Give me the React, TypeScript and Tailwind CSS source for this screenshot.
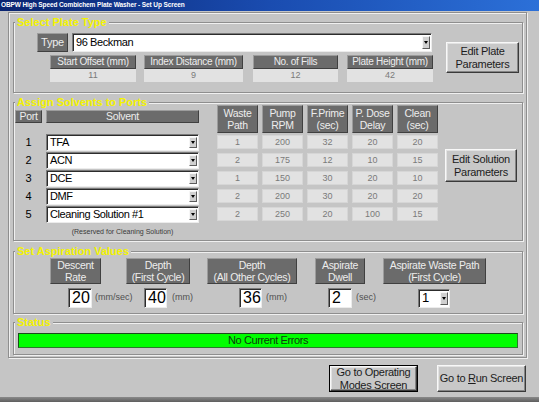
import React from "react";

const F = "font-['Liberation_Sans',Arial,sans-serif]";

function Hdr({ children, className = "" }: { children: React.ReactNode; className?: string }) {
  return (
    <div
      className={`bg-[#6b6b6b] text-[#ededed] border border-t-[#9c9c9c] border-l-[#9c9c9c] border-r-[#404040] border-b-[#404040] flex items-center justify-center text-center whitespace-nowrap ${className}`}
    >
      {children}
    </div>
  );
}

function Group({ title, className = "", children }: { title: string; className?: string; children?: React.ReactNode }) {
  return (
    <div className={`relative shrink-0 border border-[#8e8e8e] shadow-[inset_1px_1px_0_#f0f0f0,1px_1px_0_#f0f0f0] ${className}`}>
      <div className="absolute left-[1px] top-[-8px] px-[2px] bg-[#c5c5c5] text-[11px] font-bold leading-[14px] text-[#f4f400] whitespace-nowrap">
        {title}
      </div>
      {children}
    </div>
  );
}

function Arrow() {
  return (
    <svg width="4" height="3" viewBox="0 0 4 3">
      <path d="M0 0H4L2 3Z" fill="#000" />
    </svg>
  );
}

function Combo({ value, className = "", text = "text-[11px] tracking-[-0.4px]" }: { value: string; className?: string; text?: string }) {
  return (
    <div
      className={`flex bg-white border border-t-[#7a7a7a] border-l-[#7a7a7a] border-r-[#ececec] border-b-[#ececec] shadow-[inset_1px_1px_0_#2c2c2c] ${className}`}
    >
      <div className={`flex-1 flex items-center pl-[3px] text-black whitespace-nowrap overflow-hidden ${text}`}>{value}</div>
      <div className="w-[8px] my-[2px] mr-[1px] bg-[#d0d0d0] border border-t-[#f6f6f6] border-l-[#f6f6f6] border-r-[#5c5c5c] border-b-[#5c5c5c] flex items-center justify-center">
        <Arrow />
      </div>
    </div>
  );
}

function Field({ value, className = "" }: { value: string; className?: string }) {
  return (
    <div
      className={`h-[20px] bg-white border border-t-[#7a7a7a] border-l-[#7a7a7a] border-r-[#ececec] border-b-[#ececec] shadow-[inset_1px_1px_0_#2c2c2c] flex items-center pl-[3px] text-[16px] leading-none text-black ${className}`}
    >
      {value}
    </div>
  );
}

function Btn({ children, className = "" }: { children: React.ReactNode; className?: string }) {
  return (
    <div
      className={`bg-[#c8c8c8] border border-t-[#f8f8f8] border-l-[#f8f8f8] border-r-[#3a3a3a] border-b-[#3a3a3a] shadow-[inset_-1px_-1px_0_#858585,inset_1px_1px_0_#e2e2e2] flex items-center justify-center text-center text-[11px] leading-[13px] tracking-[-0.3px] text-[#1c1c1c] ${className}`}
    >
      {children}
    </div>
  );
}

function Cell({ v }: { v: number }) {
  return (
    <div className="h-[14px] self-center bg-[#e2e2e2] border border-[#d6d6d6] flex items-center justify-center text-[9px] leading-none text-[#7a7a7a]">
      {v}
    </div>
  );
}

const solvents = [
  { p: 1, s: "TFA", v: [1, 200, 32, 20, 20] },
  { p: 2, s: "ACN", v: [2, 175, 12, 10, 15] },
  { p: 3, s: "DCE", v: [1, 150, 30, 20, 10] },
  { p: 4, s: "DMF", v: [2, 200, 30, 20, 20] },
  { p: 5, s: "Cleaning Solution #1", v: [2, 250, 20, 100, 15] },
];

const plateFields = [
  { l: "Start Offset (mm)", v: "11", w: "w-[86px]", ml: "ml-0" },
  { l: "Index Distance (mm)", v: "9", w: "w-[99px]", ml: "ml-[8px]" },
  { l: "No. of Fills", v: "12", w: "w-[85px]", ml: "ml-[10px]" },
  { l: "Plate Height (mm)", v: "42", w: "w-[86px]", ml: "ml-[9px]" },
];

export default function App() {
  return (
    <div className={`w-[539px] h-[402px] bg-[#c5c5c5] flex flex-col overflow-hidden ${F}`}>
      {/* Title bar */}
      <div className="h-[11px] shrink-0 bg-gradient-to-r from-[#0a2470] via-[#1a4cb0] to-[#2c70d8] flex items-center pl-[1px]">
        <span className="text-white font-bold text-[6.5px] leading-none tracking-[-0.1px] whitespace-nowrap">
          OBPW High Speed Combichem Plate Washer - Set Up Screen
        </span>
      </div>

      {/* Outer frame */}
      <div className="ml-[8px] mt-[1px] w-[519px] h-[346px] shrink-0 border border-[#8e8e8e] shadow-[inset_1px_1px_0_#f0f0f0,1px_1px_0_#f0f0f0] pl-[4px] pt-[9px] flex flex-col">
        {/* Select Plate Type */}
        <Group title="Select Plate Type" className="w-[510px] h-[71px] pt-[10px] pl-[23px] flex">
          <div className="flex flex-col">
            <div className="flex gap-[4px]">
              <Hdr className="w-[31px] h-[19px] text-[11px] tracking-[-0.2px]">Type</Hdr>
              <Combo value="96 Beckman" className="w-[360px] h-[19px]" />
            </div>
            <div className="flex mt-[3px] ml-[13px]">
              {plateFields.map((f) => (
                <div key={f.l} className={`flex flex-col ${f.w} ${f.ml}`}>
                  <Hdr className="h-[14px] text-[10px] tracking-[-0.3px] leading-none">{f.l}</Hdr>
                  <div className="h-[13px] bg-[#e2e2e2] flex items-center justify-center text-[9px] leading-none text-[#7a7a7a]">
                    {f.v}
                  </div>
                </div>
              ))}
            </div>
          </div>
          <Btn className="ml-[13px] mt-[9px] w-[73px] h-[31px]">
            Edit Plate
            <br />
            Parameters
          </Btn>
        </Group>

        {/* Assign Solvents to Ports */}
        <Group title="Assign Solvents to Ports" className="mt-[9px] w-[510px] h-[139px] pt-[2px] pl-[1px] flex">
          <div className="grid grid-cols-[27px_153px_10px_41px_41px_41px_41px_41px] grid-rows-[28px_18px_18px_18px_18px_18px_auto] gap-x-[4px]">
            <Hdr className="self-start mt-[5px] h-[13px] text-[10.5px] tracking-[-0.3px] leading-none">Port</Hdr>
            <Hdr className="self-start mt-[5px] h-[13px] text-[10.5px] tracking-[-0.3px] leading-none">Solvent</Hdr>
            <div />
            {[
              ["Waste", "Path"],
              ["Pump", "RPM"],
              ["F.Prime", "(sec)"],
              ["P. Dose", "Delay"],
              ["Clean", "(sec)"],
            ].map(([a, b]) => (
              <Hdr key={a} className="h-[28px] text-[10.5px] tracking-[-0.3px] leading-[12px]">
                <span>
                  {a}
                  <br />
                  {b}
                </span>
              </Hdr>
            ))}
            {solvents.map((r) => (
              <React.Fragment key={r.p}>
                <div className="flex items-center justify-center text-[11px] text-black leading-none">{r.p}</div>
                <Combo value={r.s} className="h-[17px] self-end" />
                <div />
                {r.v.map((v, i) => (
                  <Cell key={i} v={v} />
                ))}
              </React.Fragment>
            ))}
            <div />
            <div className="pt-[5px] text-center text-[7px] leading-none text-[#3a3a3a] whitespace-nowrap">
              (Reserved for Cleaning Solution)
            </div>
          </div>
          <Btn className="ml-[7px] mt-[44px] w-[72px] h-[33px]">
            Edit Solution
            <br />
            Parameters
          </Btn>
        </Group>

        {/* Set Aspiration Values */}
        <Group title="Set Aspiration Values" className="mt-[10px] w-[510px] h-[63px] pt-[6px] flex flex-col">
          <div className="flex text-[10.5px] tracking-[-0.3px] leading-[12px]">
            <Hdr className="ml-[36px] w-[51px] h-[26px]">
              <span>Descent<br />Rate</span>
            </Hdr>
            <Hdr className="ml-[25px] w-[64px] h-[26px]">
              <span>Depth<br />(First Cycle)</span>
            </Hdr>
            <Hdr className="ml-[17px] w-[90px] h-[26px]">
              <span>Depth<br />(All Other Cycles)</span>
            </Hdr>
            <Hdr className="ml-[18px] w-[50px] h-[26px]">
              <span>Aspirate<br />Dwell</span>
            </Hdr>
            <Hdr className="ml-[18px] w-[103px] h-[26px]">
              <span>Aspirate Waste Path<br />(First Cycle)</span>
            </Hdr>
          </div>
          <div className="flex mt-[4px] pl-[54px] text-[9px] text-[#505050]">
            <div className="w-[76px] flex items-center">
              <Field value="20" className="w-[24px]" />
              <span className="ml-[3px]">(mm/sec)</span>
            </div>
            <div className="w-[95px] flex items-center">
              <Field value="40" className="w-[23px]" />
              <span className="ml-[5px]">(mm)</span>
            </div>
            <div className="w-[89px] flex items-center">
              <Field value="36" className="w-[23px]" />
              <span className="ml-[4px]">(mm)</span>
            </div>
            <div className="w-[90px] flex items-center">
              <Field value="2" className="w-[24px]" />
              <span className="ml-[4px]">(sec)</span>
            </div>
            <Combo value="1" className="w-[32px] h-[19px] self-center" text="text-[13px]" />
          </div>
        </Group>

        {/* Status */}
        <Group title="Status" className="mt-[8px] w-[510px] h-[33px] pt-[10px] pl-[4px]">
          <div className="w-[500px] h-[15px] bg-[#00ff00] border border-t-[#1c4a1c] border-l-[#1c4a1c] border-r-[#2a7a2a] border-b-[#2a7a2a] flex items-center justify-center text-[11px] tracking-[-0.4px] leading-none text-[#0e3a0e]">
            No Current Errors
          </div>
        </Group>
      </div>

      {/* Bottom buttons */}
      <div className="flex mt-[7px] pl-[329px]">
        <div className="w-[89px] h-[27px] border border-black flex">
          <Btn className="flex-1">
            Go to Operating
            <br />
            Modes Screen
          </Btn>
        </div>
        <Btn className="ml-[19px] w-[89px] h-[27px]">
          <span>
            Go to <span className="underline">R</span>un Screen
          </span>
        </Btn>
      </div>

      <div className="mt-auto h-[5px] bg-gradient-to-b from-[#8a8a8a] to-[#5e5e5e]" />
    </div>
  );
}
